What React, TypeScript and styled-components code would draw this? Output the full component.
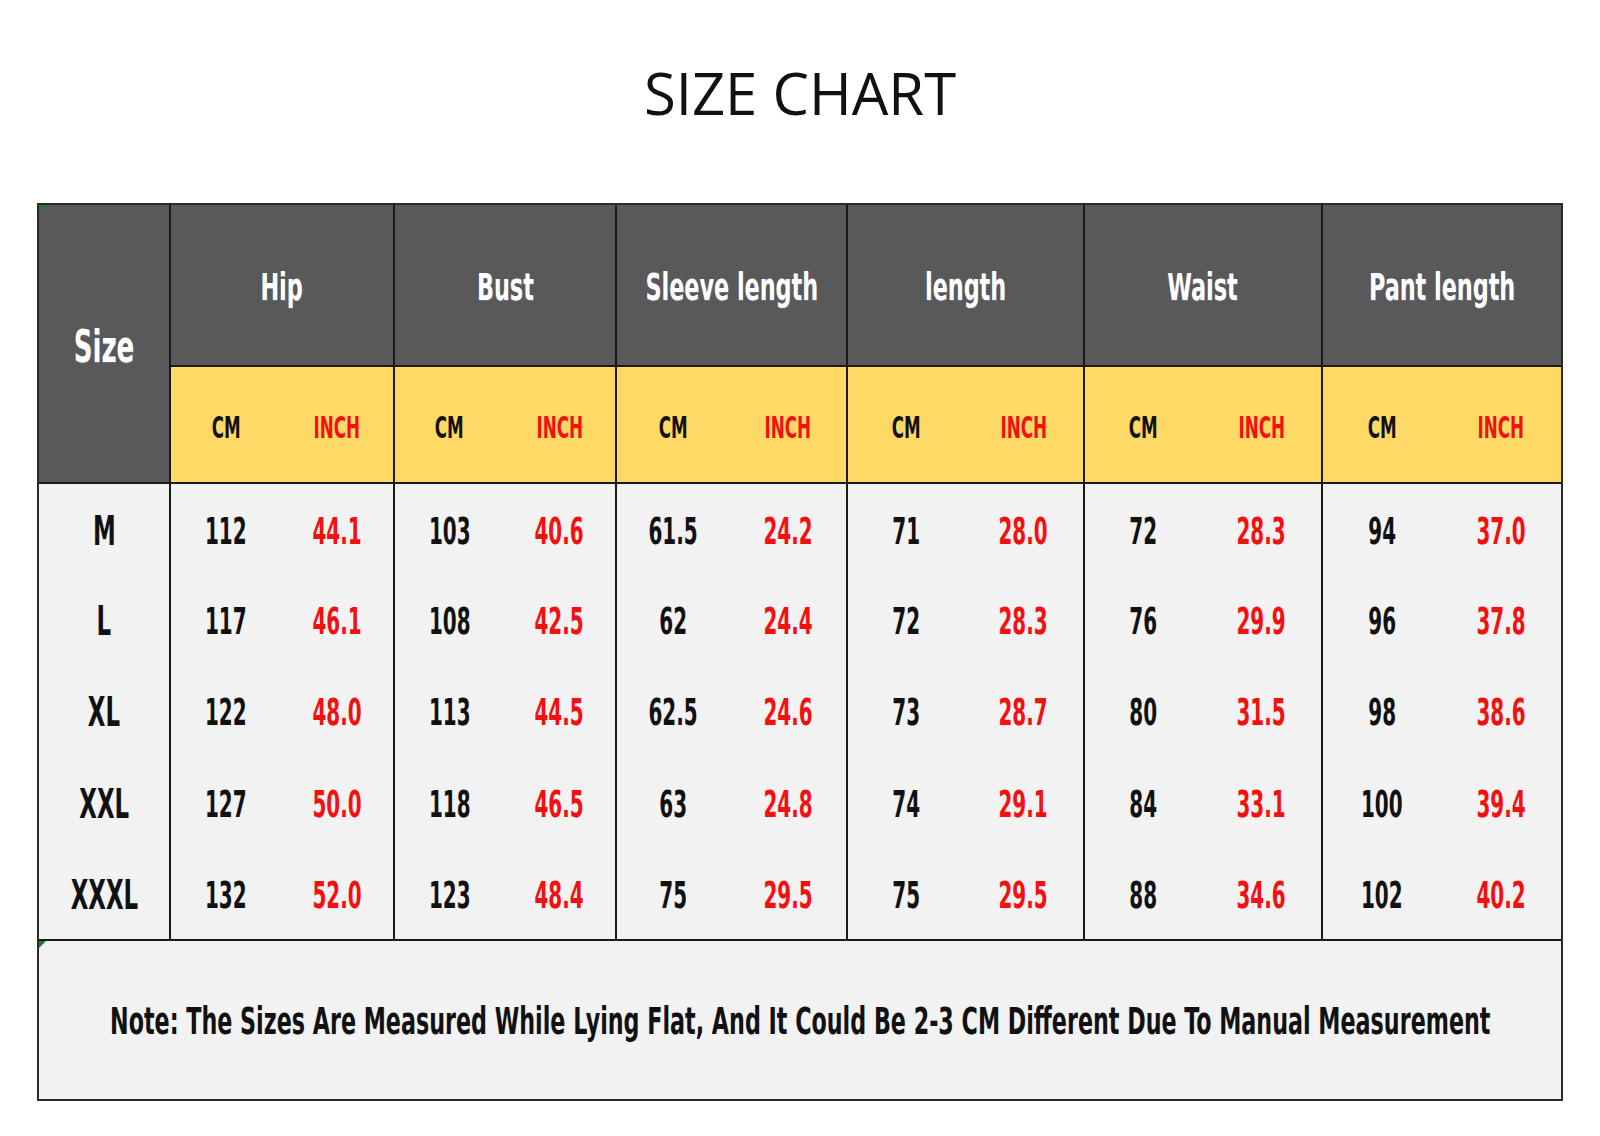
import React from 'react'
import styled, { createGlobalStyle } from 'styled-components'

// DATA

const groups = ['Hip', 'Bust', 'Sleeve length', 'length', 'Waist', 'Pant length']

const rows: [string, string[]][] = [
	['M', ['112', '44.1', '103', '40.6', '61.5', '24.2', '71', '28.0', '72', '28.3', '94', '37.0']],
	['L', ['117', '46.1', '108', '42.5', '62', '24.4', '72', '28.3', '76', '29.9', '96', '37.8']],
	['XL', ['122', '48.0', '113', '44.5', '62.5', '24.6', '73', '28.7', '80', '31.5', '98', '38.6']],
	['XXL', ['127', '50.0', '118', '46.5', '63', '24.8', '74', '29.1', '84', '33.1', '100', '39.4']],
	['XXXL', ['132', '52.0', '123', '48.4', '75', '29.5', '75', '29.5', '88', '34.6', '102', '40.2']],
]

// CSS

const GlobalStyle = createGlobalStyle`
	* { box-sizing: border-box; }
	body {
		margin: 0;
		background: #fff;
	}
`

const condensed = `'DejaVu Sans Condensed', 'Liberation Sans Narrow', 'Liberation Sans', sans-serif`

const Page = styled.div`
	width: 1600px;
	height: 1136px;
	padding: 0 37px;
	background: #fff;
`

const Title = styled.h1`
	margin: 0;
	height: 203px;
	padding-top: 64px;
	font-family: 'Open Sans', sans-serif;
	font-weight: 400;
	font-size: 58px;
	line-height: 1;
	text-align: center;
	color: #111;
`

const Sheet = styled.div`
	position: relative;
	width: 1526px;
	display: grid;
	grid-template-columns: 130px 112px 112px 111px 111px 115px 116px 118px 119px 119px 119px 120px 120px;
	grid-template-rows: 160px 117px repeat(5, 91.4px) 160px;
	border: 2px solid #2a2a2a;
	font-family: ${condensed};
	font-weight: 700;

	&::before {
		content: '';
		position: absolute;
		left: 0;
		top: 0;
		border-top: 7px solid #1f7a1f;
		border-right: 7px solid transparent;
	}
`

const Cell = styled.div<{ $bg: string; $left?: boolean; $top?: boolean }>`
	display: flex;
	align-items: center;
	justify-content: center;
	padding-top: 5px;
	background: ${p => p.$bg};
	border-left: ${p => (p.$left ? '2px solid #1a1a1a' : 'none')};
	border-top: ${p => (p.$top ? '2px solid #1a1a1a' : 'none')};
`

const SizeHead = styled(Cell)`
	grid-row: 1 / 3;
	padding-top: 6px;
`

const GroupHead = styled(Cell)`
	grid-column: span 2;
	padding-top: 4px;
`

const Note = styled(Cell)`
	position: relative;
	grid-column: 1 / -1;
	padding-top: 3px;

	&::before {
		content: '';
		position: absolute;
		left: 0;
		top: 0;
		border-top: 7px solid #1f7a1f;
		border-right: 7px solid transparent;
	}
`

const Txt = styled.span<{ $size: number; $sx: number; $color: string; $shadow?: boolean }>`
	display: inline-block;
	white-space: nowrap;
	font-size: ${p => p.$size}px;
	line-height: 1;
	color: ${p => p.$color};
	transform: scaleX(${p => p.$sx});
	text-shadow: ${p => (p.$shadow ? '1px 1px 0 rgba(120,150,200,0.45)' : 'none')};
`

// COMPONENT

export default function App() {
	return (
		<Page>
			<GlobalStyle />
			<Title>SIZE CHART</Title>
			<Sheet>
				<SizeHead $bg='#595959'>
					<Txt $size={44} $sx={0.66} $color='#fff' $shadow>
						Size
					</Txt>
				</SizeHead>
				{groups.map(g => (
					<GroupHead key={g} $bg='#595959' $left>
						<Txt $size={37} $sx={0.67} $color='#fff' $shadow>
							{g}
						</Txt>
					</GroupHead>
				))}
				{groups.map(g =>
					['CM', 'INCH'].map(u => (
						<Cell key={g + u} $bg='#ffd966' $left={u === 'CM'} $top>
							<Txt $size={31} $sx={0.6} $color={u === 'CM' ? '#111' : '#f21010'}>
								{u}
							</Txt>
						</Cell>
					))
				)}
				{rows.map(([size, vals], r) => (
					<React.Fragment key={size}>
						<Cell $bg='#f2f2f2' $top={r === 0}>
							<Txt $size={41} $sx={0.62} $color='#111'>
								{size}
							</Txt>
						</Cell>
						{vals.map((v, i) => (
							<Cell key={i} $bg='#f2f2f2' $left={i % 2 === 0} $top={r === 0}>
								<Txt $size={37} $sx={0.6} $color={i % 2 === 0 ? '#111' : '#f21010'}>
									{v}
								</Txt>
							</Cell>
						))}
					</React.Fragment>
				))}
				<Note $bg='#f2f2f2' $top>
					<Txt $size={37} $sx={0.668} $color='#111'>
						Note: The Sizes Are Measured While Lying Flat, And It Could Be 2-3 CM Different Due To Manual
						Measurement
					</Txt>
				</Note>
			</Sheet>
		</Page>
	)
}
